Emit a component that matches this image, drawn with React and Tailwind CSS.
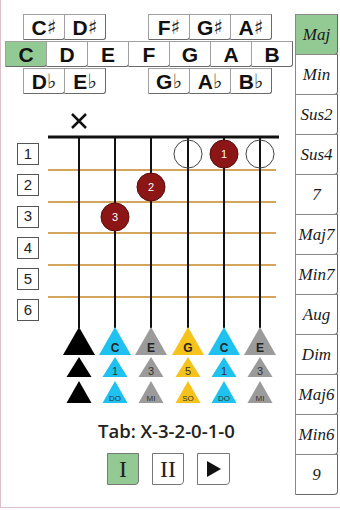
import React from "react";

const naturals = ["C", "D", "E", "F", "G", "A", "B"];
const chords = ["Maj", "Min", "Sus2", "Sus4", "7", "Maj7", "Min7", "Aug", "Dim", "Maj6", "Min6", "9"];

const strings = [39, 75, 111, 148, 184, 220];
const frets = [70, 102, 133, 165, 197];
const notes = [
  { c: "#000000", n: "", d: "", s: "" },
  { c: "#1fc1ef", n: "C", d: "1", s: "DO" },
  { c: "#9b9b9b", n: "E", d: "3", s: "MI" },
  { c: "#f6c31c", n: "G", d: "5", s: "SO" },
  { c: "#1fc1ef", n: "C", d: "1", s: "DO" },
  { c: "#9b9b9b", n: "E", d: "3", s: "MI" },
];

function Key({ note, acc, active }) {
  return (
    <div
      className={
        "-ml-px first:ml-0 w-[42px] h-[26px] flex items-center justify-center border border-[#a0a0a0] border-r-[#6a6a6a] border-b-[#6a6a6a] rounded-br-[3px] " +
        (active ? "bg-[#93c993]" : "bg-white")
      }
    >
      <span className="font-['Liberation_Sans',sans-serif] font-bold text-[21px] leading-none text-[#111]">{note}</span>
      {acc && <span className="font-['DejaVu_Sans',sans-serif] text-[20px] leading-none text-[#222]">{acc}</span>}
    </div>
  );
}

function Tri({ x, top, h, w, color }) {
  return <polygon points={`${x},${top} ${x - w},${top + h} ${x + w},${top + h}`} fill={color} />;
}

export default function App() {
  return (
    <div className="w-[340px] h-[508px] flex bg-white border-l border-b border-[#dcc0c8] overflow-hidden">
      <div className="w-[294px] pt-[14px] flex flex-col">
        <div className="flex flex-col gap-[1px]">
          <div className="flex pl-[22px]">
            <Key note="C" acc="♯" />
            <Key note="D" acc="♯" />
            <div className="w-[43px]" />
            <Key note="F" acc="♯" />
            <Key note="G" acc="♯" />
            <Key note="A" acc="♯" />
          </div>
          <div className="flex pl-[4px]">
            {naturals.map((n) => (
              <Key key={n} note={n} active={n === "C"} />
            ))}
          </div>
          <div className="flex pl-[22px]">
            <Key note="D" acc="♭" />
            <Key note="E" acc="♭" />
            <div className="w-[43px]" />
            <Key note="G" acc="♭" />
            <Key note="A" acc="♭" />
            <Key note="B" acc="♭" />
          </div>
        </div>

        <div className="flex">
          <div className="ml-[16px] mt-[49px] flex flex-col gap-[9.3px]">
            {[1, 2, 3, 4, 5, 6].map((f) => (
              <div key={f} className="w-[22px] h-[22px] border border-[#555] bg-white flex items-center justify-center font-['Liberation_Sans',sans-serif] text-[15px] text-[#222]">
                {f}
              </div>
            ))}
          </div>
          <svg className="ml-[1px] mt-[6px]" width="250" height="310" viewBox="0 0 250 310">
            <path d="M32 14 L46 28 M46 14 L32 28" stroke="#111" strokeWidth="2.5" />
            {frets.map((y) => (
              <line key={y} x1="8" x2="236" y1={y} y2={y} stroke="#d4a55c" strokeWidth="2" />
            ))}
            {strings.map((x) => (
              <line key={x} x1={x} x2={x} y1="37" y2="228" stroke="#111" strokeWidth="2" />
            ))}
            <line x1="8" x2="239" y1="37" y2="37" stroke="#111" strokeWidth="3" />
            <circle cx="148" cy="54" r="14" fill="none" stroke="#444" strokeWidth="1" />
            <circle cx="220" cy="54" r="14" fill="none" stroke="#444" strokeWidth="1" />
            {[
              [184, 54, "1"],
              [111, 87, "2"],
              [75, 117, "3"],
            ].map(([cx, cy, t]) => (
              <g key={t}>
                <circle cx={cx} cy={cy} r="14" fill="#8c1515" stroke="#5a0b0b" strokeWidth="1" />
                <text x={cx} y={cy + 4} textAnchor="middle" fill="#fff" fontSize="11" fontFamily="Liberation Sans, sans-serif">{t}</text>
              </g>
            ))}
            {notes.map((n, i) => {
              const x = strings[i];
              return (
                <g key={i}>
                  <Tri x={x} top={227} h={28} w={16} color={n.c} />
                  <Tri x={x} top={257} h={20} w={12.5} color={n.c} />
                  <Tri x={x} top={281} h={22} w={12.5} color={n.c} />
                  <text x={x} y={252} textAnchor="middle" fontSize="12" fontWeight="bold" fill="#222" fontFamily="Liberation Sans, sans-serif">{n.n}</text>
                  <text x={x} y={275} textAnchor="middle" fontSize="11" fill="#333" fontFamily="Liberation Sans, sans-serif">{n.d}</text>
                  <text x={x} y={301} textAnchor="middle" fontSize="8" fill="#333" fontFamily="Liberation Sans, sans-serif">{n.s}</text>
                </g>
              );
            })}
          </svg>
        </div>

        <div className="pl-[97px] mt-[9px] font-['Open_Sans',sans-serif] font-semibold text-[18.5px] leading-[24px] text-[#222]">
          Tab: X-3-2-0-1-0
        </div>
        <div className="pl-[106px] mt-[10px] flex gap-[13px]">
          <div className="w-[32px] h-[32px] bg-[#93c993] border border-[#777] rounded-br-[4px] flex items-center justify-center font-['Liberation_Serif',serif] text-[24px] text-[#222]">I</div>
          <div className="w-[32px] h-[32px] bg-white border border-[#777] rounded-br-[4px] flex items-center justify-center font-['Liberation_Serif',serif] text-[24px] text-[#222]">II</div>
          <div className="w-[33px] h-[32px] bg-white border border-[#777] rounded-br-[4px] flex items-center justify-center">
            <svg width="16" height="18" viewBox="0 0 16 18"><polygon points="1,1 15,9 1,17" fill="#111" /></svg>
          </div>
        </div>
      </div>

      <div className="w-[43px] pt-[14px] flex flex-col">
        {chords.map((c) => (
          <div
            key={c}
            className={
              "-mt-px first:mt-0 h-[41px] flex items-center justify-center border border-[#888] border-r-[#666] border-b-[#666] rounded-br-[4px] font-['Liberation_Serif',serif] italic text-[17px] text-[#1a1a1a] " +
              (c === "Maj" ? "bg-[#93c993]" : "bg-white")
            }
          >
            {c}
          </div>
        ))}
      </div>
    </div>
  );
}
